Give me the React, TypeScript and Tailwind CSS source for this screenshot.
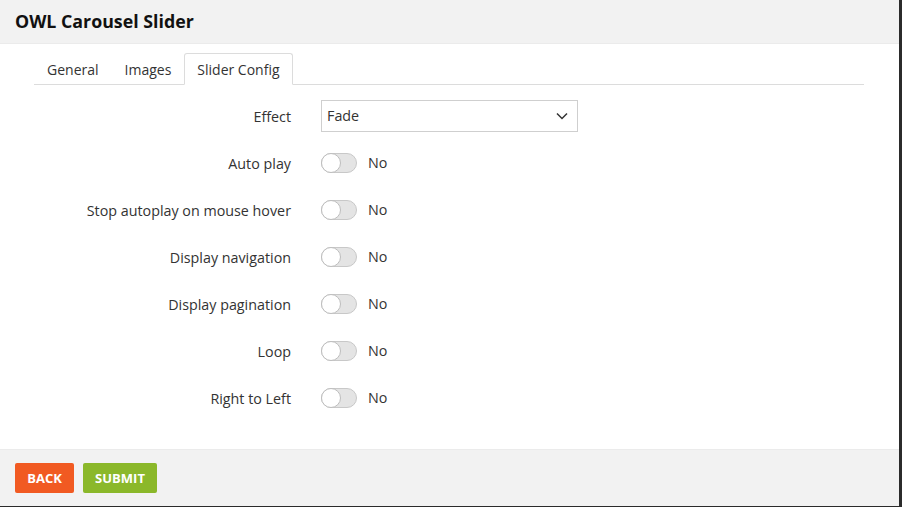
import React, { useState } from 'react';

const rows = [
  'Auto play',
  'Stop autoplay on mouse hover',
  'Display navigation',
  'Display pagination',
  'Loop',
  'Right to Left',
];

const Toggle = ({ on, onClick }: { on: boolean; onClick: () => void }) => (
  <button
    type="button"
    onClick={onClick}
    className={`relative w-[36px] h-[20px] rounded-full border ${on ? 'bg-[#8bb82a] border-[#8bb82a]' : 'bg-[#e4e4e4] border-[#c8c8c8]'}`}
  >
    <span
      className={`absolute top-[-1px] w-[20px] h-[20px] rounded-full bg-white border border-[#bdbdbd] ${on ? 'left-[15px]' : 'left-[-1px]'}`}
    />
  </button>
);

const App = () => {
  const [tab, setTab] = useState('Slider Config');
  const [values, setValues] = useState<boolean[]>(rows.map(() => false));

  return (
    <div className="w-[902px] h-[507px] bg-[#2b2b2b] flex" style={{ fontFamily: '"Open Sans", sans-serif' }}>
      <div className="w-[899px] h-[506px] bg-white flex flex-col text-[#333]">
        {/* Header */}
        <div className="h-[44px] bg-[#f2f2f2] border-b border-[#ebebeb] px-[15px] flex items-center">
          <h1 className="text-[17.8px] font-bold text-[#111] leading-none">OWL Carousel Slider</h1>
        </div>

        {/* Tabs */}
        <div className="mt-[9px] ml-[34px] w-[830px] border-b border-[#dcdcdc] flex">
          {['General', 'Images', 'Slider Config'].map((t) => (
            <button
              key={t}
              type="button"
              onClick={() => setTab(t)}
              className={`h-[32px] px-[12px] text-[14px] pt-px -mb-px rounded-t-[3px] border ${
                tab === t ? 'bg-white border-[#dcdcdc] border-b-white text-[#333]' : 'border-transparent text-[#333]'
              }`}
            >
              {t}
            </button>
          ))}
        </div>

        {/* Form */}
        <div className="flex flex-col gap-[15px] mt-[15px] text-[14.3px]">
          <div className="flex items-center h-[32px]">
            <label className="w-[291px] text-right pt-px">Effect</label>
            <div className="ml-[30px] w-[257px] h-[32px] border border-[#cfcfcf] flex items-center justify-between pl-[5px] pr-[9px]">
              <span>Fade</span>
              <svg width="12" height="8" viewBox="0 0 12 8" fill="none">
                <path d="M1 1.5 L6 6.5 L11 1.5" stroke="#333" strokeWidth="1.5" />
              </svg>
            </div>
          </div>
          {rows.map((r, i) => (
            <div key={r} className="flex items-center h-[32px]">
              <label className="w-[291px] text-right pt-px">{r}</label>
              <div className="ml-[30px] flex items-center gap-[11px]">
                <Toggle on={values[i]} onClick={() => setValues((v) => v.map((x, j) => (j === i ? !x : x)))} />
                <span>{values[i] ? 'Yes' : 'No'}</span>
              </div>
            </div>
          ))}
        </div>

        {/* Footer */}
        <div className="mt-auto h-[57px] bg-[#f2f2f2] border-t border-[#ebebeb] px-[15px] pt-[13px] flex gap-[9px] items-start">
          <button type="button" className="h-[30px] w-[59px] bg-[#f15a22] text-white text-[13px] font-bold rounded-[2px] pt-px">
            BACK
          </button>
          <button type="button" className="h-[30px] w-[74px] bg-[#8bb82a] text-white text-[13px] font-bold rounded-[2px] pt-px">
            SUBMIT
          </button>
        </div>
      </div>
    </div>
  );
};

export default App;
